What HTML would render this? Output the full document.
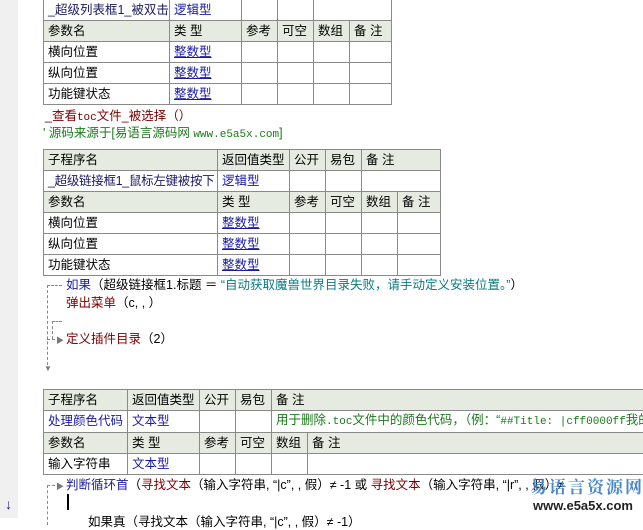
<!DOCTYPE html>
<html><head><meta charset="utf-8"><style>
*{margin:0;padding:0;box-sizing:border-box}
body{width:643px;height:518px;overflow:hidden;background:#fff;position:relative;font-family:"Liberation Sans","Noto Sans CJK SC",sans-serif;font-size:12.5px;color:#000}
.g{position:absolute;left:0;top:0;width:18px;height:518px;background:#f0f0f0}
table{position:absolute;border-collapse:collapse;table-layout:fixed}
td{border:1px solid #8a8a8a;height:21px;padding:0 0 0 4px;white-space:nowrap;overflow:hidden;line-height:19px}
.h td{background:#e6ebe1}
.b{color:#1a1aa0}
.bu{color:#1a1aa0;text-decoration:underline}
.r{color:#7a0000}
.gr{color:#1a7a1a}
.t{position:absolute;white-space:nowrap;line-height:16px}
.m{font-family:"Liberation Mono",monospace;font-size:11px}
.dv{position:absolute;border-left:1px dashed #888}
.dh{position:absolute;border-top:1px dashed #888}
</style></head><body>
<div class="g"></div>

<table style="left:43px;top:-1px;width:349px">
<colgroup><col style="width:126px"><col style="width:72px"><col style="width:36px"><col style="width:36px"><col style="width:36px"><col style="width:42px"></colgroup>
<tr><td style="color:#1a1a60">_超级列表框1_被双击</td><td class="b">逻辑型</td><td></td><td></td><td colspan="2"></td></tr>
<tr class="h"><td>参数名</td><td>类 型</td><td>参考</td><td>可空</td><td>数组</td><td>备 注</td></tr>
<tr><td>横向位置</td><td class="bu">整数型</td><td></td><td></td><td></td><td></td></tr>
<tr><td>纵向位置</td><td class="bu">整数型</td><td></td><td></td><td></td><td></td></tr>
<tr><td>功能键状态</td><td class="bu">整数型</td><td></td><td></td><td></td><td></td></tr>
</table>

<div class="t r" style="left:45px;top:108px">_查看<span class="m">toc</span>文件_被选择（）</div>
<div class="t gr" style="left:43px;top:125px">' 源码来源于[易语言源码网 <span class="m">www.e5a5x.com</span>]</div>

<table style="left:43px;top:149px;width:397px">
<colgroup><col style="width:174px"><col style="width:72px"><col style="width:36px"><col style="width:36px"><col style="width:36px"><col style="width:43px"></colgroup>
<tr class="h"><td>子程序名</td><td>返回值类型</td><td>公开</td><td>易包</td><td colspan="2">备 注</td></tr>
<tr><td style="color:#1a1a60;letter-spacing:-0.3px">_超级链接框1_鼠标左键被按下</td><td class="b">逻辑型</td><td></td><td></td><td colspan="2"></td></tr>
<tr class="h"><td>参数名</td><td>类 型</td><td>参考</td><td>可空</td><td>数组</td><td>备 注</td></tr>
<tr><td>横向位置</td><td class="bu">整数型</td><td></td><td></td><td></td><td></td></tr>
<tr><td>纵向位置</td><td class="bu">整数型</td><td></td><td></td><td></td><td></td></tr>
<tr><td>功能键状态</td><td class="bu">整数型</td><td></td><td></td><td></td><td></td></tr>
</table>

<div class="dh" style="left:47px;top:285px;width:15px"></div>
<div class="dv" style="left:47px;top:285px;height:80px"></div>
<div class="t" style="left:44px;top:361px;font-size:8px;color:#777">▼</div>
<div class="dh" style="left:52px;top:321px;width:10px"></div>
<div class="dv" style="left:52px;top:321px;height:18px"></div>
<div class="dh" style="left:47px;top:339px;width:8px"></div>
<div class="t" style="left:56px;top:333px;font-size:8px;color:#777">▶</div>

<div class="t" style="left:66px;top:277px"><span class="b">如果</span>（超级链接框1.标题 ＝ <span style="color:#0a7a80">“自动获取魔兽世界目录失败，请手动定义安装位置。”</span>）</div>
<div class="t r" style="left:66px;top:295px">弹出菜单<span style="color:#000">（c, , ）</span></div>
<div class="t r" style="left:66px;top:331px">定义插件目录<span style="color:#000">（2）</span></div>

<table style="left:43px;top:389px;width:620px">
<colgroup><col style="width:84px"><col style="width:72px"><col style="width:36px"><col style="width:36px"><col style="width:36px"><col style="width:356px"></colgroup>
<tr class="h"><td>子程序名</td><td>返回值类型</td><td>公开</td><td>易包</td><td colspan="2">备 注</td></tr>
<tr><td class="b">处理颜色代码</td><td class="b">文本型</td><td></td><td></td><td colspan="2" class="gr">用于删除<span class="m">.toc</span>文件中的颜色代码，（例：“<span class="m">##Title: |cff0000ff</span>我的</td></tr>
<tr class="h"><td>参数名</td><td>类 型</td><td>参考</td><td>可空</td><td>数组</td><td>备 注</td></tr>
<tr><td>输入字符串</td><td class="b">文本型</td><td></td><td></td><td></td><td></td></tr>
</table>

<div class="dh" style="left:47px;top:485px;width:8px"></div>
<div class="dv" style="left:47px;top:485px;height:40px"></div>
<div class="t" style="left:56px;top:479px;font-size:8px;color:#777">▶</div>
<div class="t" style="left:66px;top:477px"><span class="b">判断循环首</span>（<span class="r">寻找文本</span>（输入字符串, “|c”, , 假）≠ -1 或 <span class="r">寻找文本</span>（输入字符串, “|r”, , 假）≠</div>
<div style="position:absolute;left:67px;top:494px;width:2px;height:16px;background:#000"></div>
<div class="t" style="left:88px;top:514px">如果真（寻找文本（输入字符串, “|c”, , 假）≠ -1）</div>
<div class="t" style="left:5px;top:496px;color:#1a1a80;font-size:14px">↓</div>

<div class="t" style="left:530px;top:478px;color:#4a88c8;font-size:17px;font-weight:bold;font-family:'Noto Serif CJK SC',serif;letter-spacing:2px">易语言资源网</div>
<div class="t" style="left:531px;top:498px;font-size:13px;font-weight:bold;color:#222;background:#fff;padding:0 2px">www.e5a5x.com</div>
</body></html>
